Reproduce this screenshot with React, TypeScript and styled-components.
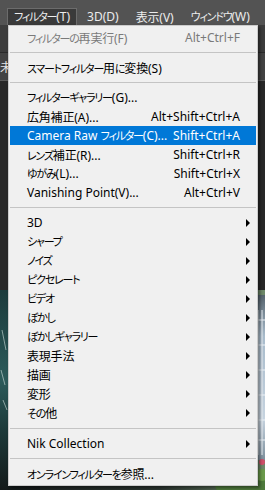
import React from "react";
import styled, { createGlobalStyle } from "styled-components";

const Global = createGlobalStyle`
  html, body { margin: 0; padding: 0; background: #282828; }
  body { width: 265px; height: 490px; overflow: hidden; }
`;

const Screen = styled.div`
  position: relative;
  width: 265px;
  height: 490px;
  overflow: hidden;
  display: flex;
  flex-direction: column;
  background: #282828;
  font-family: "Noto Sans", "Noto Sans CJK JP", sans-serif;
  font-size: 12px;
`;

const Kana = styled.span`
  font-family: "Noto Sans CJK JP", sans-serif;
  font-feature-settings: "palt" 1;
  font-size: 11px;
  letter-spacing: -1.2px;
`;

const Kanji = styled.span`
  font-family: "Noto Sans CJK JP", sans-serif;
  font-size: 12px;
  letter-spacing: -0.2px;
`;

const MenuBar = styled.div`
  flex: none;
  height: 25px;
  background: #535353;
  display: flex;
  align-items: flex-end;
  gap: 3px;
  padding-left: 7px;
  box-sizing: border-box;
`;

const BarItem = styled.div<{ $active?: boolean }>`
  height: 17px;
  line-height: 15px;
  padding: 0 6px;
  color: #ececec;
  white-space: nowrap;
  box-sizing: border-box;
  background: ${(p) => (p.$active ? "#3a3a3a" : "transparent")};
  border: 1px solid ${(p) => (p.$active ? "#6c6c6c" : "transparent")};
  border-bottom: none;
`;

const OptionsBar = styled.div`
  flex: none;
  height: 27px;
  background: #3c3c3c;
  border-bottom: 1px solid #2a2a2a;
`;

const TabBar = styled.div`
  flex: none;
  height: 27px;
  background: #424242;
  display: flex;
  align-items: center;
  border-bottom: 1px solid #5a5a5a;
`;

const Tab = styled.div`
  color: #e6e6e6;
  white-space: nowrap;
`;

const Canvas = styled.div`
  flex: 1;
  display: flex;
  flex-direction: column;
  justify-content: flex-end;
  background: #282828;
`;

const Photo = styled.svg`
  display: block;
  flex: none;
`;

const Menu = styled.div`
  position: absolute;
  top: 25px;
  left: 8px;
  width: 250px;
  box-sizing: border-box;
  background: #f0f0f0;
  border: 1px solid #cccccc;
  padding: 2px 1px 2px;
  box-shadow: 2px 2px 3px rgba(0, 0, 0, 0.45);
  display: flex;
  flex-direction: column;
`;

const Row = styled.div<{ $hot?: boolean; $disabled?: boolean }>`
  height: 19px;
  line-height: 19px;
  display: flex;
  align-items: center;
  padding-left: 17px;
  white-space: nowrap;
  background: ${(p) => (p.$hot ? "#0078d7" : "transparent")};
  color: ${(p) => (p.$hot ? "#ffffff" : p.$disabled ? "#7a7a7a" : "#000000")};
`;

const Label = styled.span`
  flex: 1;
`;

const Shortcut = styled.span`
  flex: none;
`;

const Trail = styled.span`
  flex: none;
  width: 16px;
  height: 19px;
  display: flex;
  align-items: center;
  padding-left: 6px;
  box-sizing: border-box;
`;

const Separator = styled.div<{ $tall?: boolean }>`
  height: ${(p) => (p.$tall ? "12px" : "11px")};
  display: flex;
  align-items: center;
  &::after {
    content: "";
    display: block;
    width: 100%;
    height: 1px;
    background: #c4c4c4;
  }
`;

const Arrow = () => (
  <svg width="4" height="8" viewBox="0 0 4 8">
    <polygon points="0,0 4,4 0,8" fill="#000" />
  </svg>
);

const SPLIT_RE = /([\u3040-\u30ff\uff00-\uffef]+|[\u3400-\u9fff]+)/;
const KANA_RE = /^[\u3040-\u30ff\uff00-\uffef]+$/;
const KANJI_RE = /^[\u3400-\u9fff]+$/;

const T = ({ children }: { children: string }) => (
  <>
    {children.split(SPLIT_RE).map((part, i) => {
      if (!part) return null;
      if (KANA_RE.test(part)) return <Kana key={i}>{part}</Kana>;
      if (KANJI_RE.test(part)) return <Kanji key={i}>{part}</Kanji>;
      return <React.Fragment key={i}>{part}</React.Fragment>;
    })}
  </>
);

type Entry =
  | { sep: true; tall?: boolean }
  | { label: string; shortcut?: string; sub?: boolean; hot?: boolean; disabled?: boolean; sep?: false };

const entries: Entry[] = [
  { label: "フィルターの再実行(F)", shortcut: "Alt+Ctrl+F", disabled: true },
  { sep: true },
  { label: "スマートフィルター用に変換(S)" },
  { sep: true },
  { label: "フィルターギャラリー(G)..." },
  { label: "広角補正(A)...", shortcut: "Alt+Shift+Ctrl+A" },
  { label: "Camera Raw フィルター(C)...", shortcut: "Shift+Ctrl+A", hot: true },
  { label: "レンズ補正(R)...", shortcut: "Shift+Ctrl+R" },
  { label: "ゆがみ(L)...", shortcut: "Shift+Ctrl+X" },
  { label: "Vanishing Point(V)...", shortcut: "Alt+Ctrl+V" },
  { sep: true },
  { label: "3D", sub: true },
  { label: "シャープ", sub: true },
  { label: "ノイズ", sub: true },
  { label: "ピクセレート", sub: true },
  { label: "ビデオ", sub: true },
  { label: "ぼかし", sub: true },
  { label: "ぼかしギャラリー", sub: true },
  { label: "表現手法", sub: true },
  { label: "描画", sub: true },
  { label: "変形", sub: true },
  { label: "その他", sub: true },
  { sep: true, tall: true },
  { label: "Nik Collection", sub: true },
  { sep: true },
  { label: "オンラインフィルターを参照..." },
];

const PhotoArt = () => (
  <Photo width="265" height="200" viewBox="0 0 265 200">
    <defs>
      <linearGradient id="teal" x1="0" y1="0" x2="0" y2="1">
        <stop offset="0" stopColor="#1c3b3c" />
        <stop offset="0.45" stopColor="#2c5a5a" />
        <stop offset="0.7" stopColor="#1d3a3a" />
        <stop offset="1" stopColor="#141a1a" />
      </linearGradient>
      <linearGradient id="bldg" x1="0" y1="0" x2="0" y2="1">
        <stop offset="0" stopColor="#56646e" />
        <stop offset="0.25" stopColor="#a9bccc" />
        <stop offset="0.75" stopColor="#c7d4e0" />
        <stop offset="1" stopColor="#7d8f9c" />
      </linearGradient>
      <linearGradient id="mid" x1="0" y1="0" x2="1" y2="0">
        <stop offset="0" stopColor="#1b2020" />
        <stop offset="0.6" stopColor="#2b3530" />
        <stop offset="1" stopColor="#6f8a6a" />
      </linearGradient>
    </defs>
    <rect x="0" y="0" width="265" height="200" fill="url(#mid)" />
    <rect x="0" y="0" width="40" height="200" fill="url(#teal)" />
    <path d="M2 40 L6 60 M1 80 L5 95 M3 110 L7 120" stroke="#cfe0dc" strokeWidth="1" opacity="0.6" />
    <rect x="215" y="5" width="50" height="165" fill="url(#bldg)" />
    <path
      d="M258 20 V165 M262 20 V165 M250 30 H265 M250 55 H265 M250 80 H265 M250 105 H265 M250 130 H265 M250 150 H265"
      stroke="#eef3f8"
      strokeWidth="1"
    />
    <path d="M256 20 V165" stroke="#3d5a7a" strokeWidth="1" />
    <circle cx="262" cy="172" r="3" fill="#d0506a" />
    <ellipse cx="245" cy="195" rx="30" ry="14" fill="#4e7a3c" />
    <ellipse cx="262" cy="185" rx="8" ry="6" fill="#6a9a4a" />
  </Photo>
);

export default function App() {
  return (
    <>
      <Global />
      <Screen>
        <MenuBar>
          <BarItem $active>
            <T>フィルター(T)</T>
          </BarItem>
          <BarItem>3D(D)</BarItem>
          <BarItem>
            <T>表示(V)</T>
          </BarItem>
          <BarItem>
            <T>ウィンドウ(W)</T>
          </BarItem>
        </MenuBar>
        <OptionsBar />
        <TabBar>
          <Tab>
            <T>未タイトル-1</T>
          </Tab>
        </TabBar>
        <Canvas>
          <PhotoArt />
        </Canvas>
        <Menu>
          {entries.map((e, i) =>
            e.sep ? (
              <Separator key={i} $tall={e.tall} />
            ) : (
              <Row key={i} $hot={e.hot} $disabled={e.disabled}>
                <Label>
                  <T>{e.label}</T>
                </Label>
                {e.shortcut && <Shortcut>{e.shortcut}</Shortcut>}
                <Trail>{e.sub && <Arrow />}</Trail>
              </Row>
            )
          )}
        </Menu>
      </Screen>
    </>
  );
}
